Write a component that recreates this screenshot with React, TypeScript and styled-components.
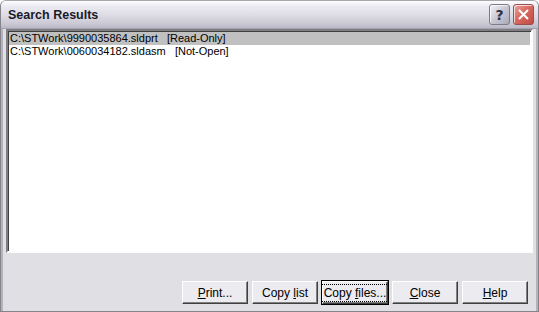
import styled, { createGlobalStyle } from "styled-components";

const Global = createGlobalStyle`
  html, body {
    margin: 0;
    padding: 0;
    background: #fff;
  }
  body {
    font-family: "Liberation Sans", Arial, sans-serif;
    font-size: 11px;
  }
`;

const Window = styled.div`
  width: 539px;
  height: 312px;
  box-sizing: border-box;
  display: flex;
  flex-direction: column;
  background: #e0dfe3;
  border: 1px solid #85848a;
  border-top-color: #a8a7ad;
  border-radius: 6px 6px 0 0;
  overflow: hidden;
`;

const TitleBar = styled.div`
  height: 27px;
  flex: none;
  display: flex;
  align-items: center;
  padding: 0 4px 0 7px;
  background: linear-gradient(
    to bottom,
    #fdfdfe 0%,
    #eceaf1 20%,
    #dcdbe4 55%,
    #c9c8d3 85%,
    #b9b8c4 100%
  );
  border-bottom: 1px solid #a4a3ad;
`;

const Title = styled.div`
  flex: 1;
  font-family: "Liberation Sans", Arial, sans-serif;
  font-weight: bold;
  font-size: 12.5px;
  color: #1a1a2a;
  padding-top: 1px;
`;

const CaptionButton = styled.div<{ $danger?: boolean }>`
  width: 21px;
  height: 21px;
  margin-left: 3px;
  box-sizing: border-box;
  border-radius: 3px;
  border: 1px solid ${(p) => (p.$danger ? "#9c4d4d" : "#7c7b8a")};
  background: ${(p) =>
    p.$danger
      ? "linear-gradient(135deg, #e9a5a0 0%, #d96a62 45%, #c04a44 100%)"
      : "linear-gradient(135deg, #f3f3f7 0%, #c8c8d4 50%, #a9a9b9 100%)"};
  display: flex;
  align-items: center;
  justify-content: center;
  box-shadow: inset 1px 1px 0 rgba(255, 255, 255, 0.7);
`;

const QMark = styled.span`
  font-family: "DejaVu Sans", sans-serif;
  font-weight: bold;
  font-size: 14px;
  color: #2e2e44;
  line-height: 1;
`;

const Body = styled.div`
  flex: 1;
  display: flex;
  flex-direction: column;
  padding: 0 3px 7px 3px;
  border-left: 2px solid #b4b3bb;
  border-right: 2px solid #b4b3bb;
`;

const List = styled.div`
  height: 224px;
  box-sizing: border-box;
  background: #fff;
  border: 2px solid;
  border-color: #7f7e84 #fdfdfd #fdfdfd #7f7e84;
  box-shadow: inset 1px 1px 0 #404040;
  padding: 1px 1px;
`;

const Row = styled.div<{ $selected?: boolean }>`
  height: 13px;
  line-height: 13px;
  padding-left: 1px;
  white-space: pre;
  font-size: 11px;
  color: #000;
  background: ${(p) => (p.$selected ? "#c0c0c0" : "transparent")};
`;

const Buttons = styled.div`
  margin-top: auto;
  display: flex;
  justify-content: flex-end;
  gap: 4px;
  padding: 0 5px 0 0;
`;

const Button = styled.div<{ $default?: boolean }>`
  width: 66px;
  height: 23px;
  box-sizing: border-box;
  display: flex;
  align-items: center;
  justify-content: center;
  background: #ecebf0;
  color: #000;
  font-size: 12px;
  border: 1px solid;
  border-color: #fff #404040 #404040 #fff;
  box-shadow: ${(p) =>
    p.$default
      ? "0 0 0 1px #000, inset -1px -1px 0 #808080"
      : "inset -1px -1px 0 #808080"};
`;

const Label = styled.span<{ $focus?: boolean }>`
  white-space: nowrap;
  padding: ${(p) => (p.$focus ? "1px 2px" : "0 1px")};
  outline: ${(p) => (p.$focus ? "1px dotted #000" : "none")};
`;

const Under = styled.span`
  text-decoration: underline;
`;

export default function App() {
  return (
    <>
      <Global />
      <Window>
        <TitleBar>
          <Title>Search Results</Title>
          <CaptionButton>
            <QMark>?</QMark>
          </CaptionButton>
          <CaptionButton $danger>
            <svg width="13" height="13" viewBox="0 0 13 13">
              <path
                d="M2.5 2.5 L10.5 10.5 M10.5 2.5 L2.5 10.5"
                stroke="#fff"
                strokeWidth="2"
                strokeLinecap="round"
              />
            </svg>
          </CaptionButton>
        </TitleBar>
        <Body>
          <List>
            <Row $selected>{"C:\\STWork\\9990035864.sldprt   [Read-Only]"}</Row>
            <Row>{"C:\\STWork\\0060034182.sldasm   [Not-Open]"}</Row>
          </List>
          <Buttons>
            <Button>
              <Label>
                <Under>P</Under>rint...
              </Label>
            </Button>
            <Button>
              <Label>
                Copy <Under>l</Under>ist
              </Label>
            </Button>
            <Button $default>
              <Label $focus>
                Copy <Under>f</Under>iles...
              </Label>
            </Button>
            <Button>
              <Label>
                <Under>C</Under>lose
              </Label>
            </Button>
            <Button>
              <Label>
                <Under>H</Under>elp
              </Label>
            </Button>
          </Buttons>
        </Body>
      </Window>
    </>
  );
}
